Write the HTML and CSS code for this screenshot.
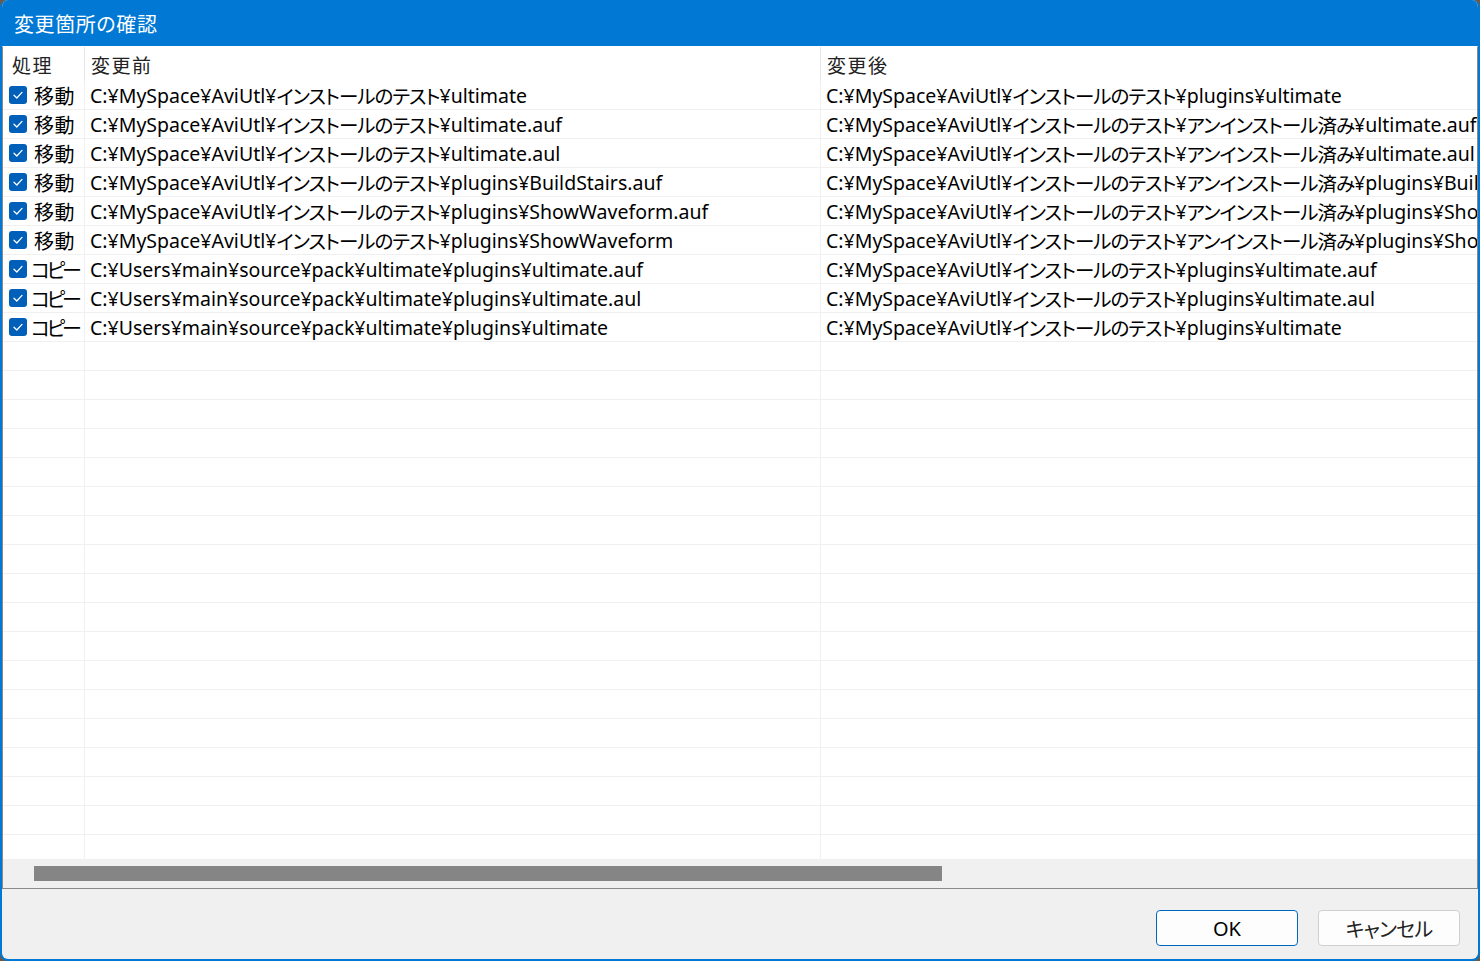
FILE: index.html
```html
<!DOCTYPE html>
<html lang="ja">
<head>
<meta charset="utf-8">
<title>変更箇所の確認</title>
<link rel="stylesheet" href="styles.css">
</head>
<body>
<div class="window">
  <div class="titlebar">変更箇所の確認</div>
  <div class="listview">
    <div class="grid">
      <div class="header">
        <div class="c1 h">処理</div>
        <div class="c2 h">変更前</div>
        <div class="c3 h">変更後</div>
      </div>
      <div class="row">
        <div class="c1"><span class="cb"><svg viewBox="0 0 18 18" width="18" height="18"><path d="M5 9.3 L7.8 12 L13 6.4"/></svg></span><span class="op">移動</span></div>
        <div class="c2">C:¥MySpace¥AviUtl¥<span class="jp">インストールのテスト</span>¥ultimate</div>
        <div class="c3">C:¥MySpace¥AviUtl¥<span class="jp">インストールのテスト</span>¥plugins¥ultimate</div>
      </div>
      <div class="row">
        <div class="c1"><span class="cb"><svg viewBox="0 0 18 18" width="18" height="18"><path d="M5 9.3 L7.8 12 L13 6.4"/></svg></span><span class="op">移動</span></div>
        <div class="c2">C:¥MySpace¥AviUtl¥<span class="jp">インストールのテスト</span>¥ultimate.auf</div>
        <div class="c3">C:¥MySpace¥AviUtl¥<span class="jp">インストールのテスト</span>¥<span class="jp">アンインストール済み</span>¥ultimate.auf</div>
      </div>
      <div class="row">
        <div class="c1"><span class="cb"><svg viewBox="0 0 18 18" width="18" height="18"><path d="M5 9.3 L7.8 12 L13 6.4"/></svg></span><span class="op">移動</span></div>
        <div class="c2">C:¥MySpace¥AviUtl¥<span class="jp">インストールのテスト</span>¥ultimate.aul</div>
        <div class="c3">C:¥MySpace¥AviUtl¥<span class="jp">インストールのテスト</span>¥<span class="jp">アンインストール済み</span>¥ultimate.aul</div>
      </div>
      <div class="row">
        <div class="c1"><span class="cb"><svg viewBox="0 0 18 18" width="18" height="18"><path d="M5 9.3 L7.8 12 L13 6.4"/></svg></span><span class="op">移動</span></div>
        <div class="c2">C:¥MySpace¥AviUtl¥<span class="jp">インストールのテスト</span>¥plugins¥BuildStairs.auf</div>
        <div class="c3">C:¥MySpace¥AviUtl¥<span class="jp">インストールのテスト</span>¥<span class="jp">アンインストール済み</span>¥plugins¥BuildStairs.auf</div>
      </div>
      <div class="row">
        <div class="c1"><span class="cb"><svg viewBox="0 0 18 18" width="18" height="18"><path d="M5 9.3 L7.8 12 L13 6.4"/></svg></span><span class="op">移動</span></div>
        <div class="c2">C:¥MySpace¥AviUtl¥<span class="jp">インストールのテスト</span>¥plugins¥ShowWaveform.auf</div>
        <div class="c3">C:¥MySpace¥AviUtl¥<span class="jp">インストールのテスト</span>¥<span class="jp">アンインストール済み</span>¥plugins¥ShowWaveform.auf</div>
      </div>
      <div class="row">
        <div class="c1"><span class="cb"><svg viewBox="0 0 18 18" width="18" height="18"><path d="M5 9.3 L7.8 12 L13 6.4"/></svg></span><span class="op">移動</span></div>
        <div class="c2">C:¥MySpace¥AviUtl¥<span class="jp">インストールのテスト</span>¥plugins¥ShowWaveform</div>
        <div class="c3">C:¥MySpace¥AviUtl¥<span class="jp">インストールのテスト</span>¥<span class="jp">アンインストール済み</span>¥plugins¥ShowWaveform</div>
      </div>
      <div class="row">
        <div class="c1"><span class="cb"><svg viewBox="0 0 18 18" width="18" height="18"><path d="M5 9.3 L7.8 12 L13 6.4"/></svg></span><span class="op copy">コピー</span></div>
        <div class="c2">C:¥Users¥main¥source¥pack¥ultimate¥plugins¥ultimate.auf</div>
        <div class="c3">C:¥MySpace¥AviUtl¥<span class="jp">インストールのテスト</span>¥plugins¥ultimate.auf</div>
      </div>
      <div class="row">
        <div class="c1"><span class="cb"><svg viewBox="0 0 18 18" width="18" height="18"><path d="M5 9.3 L7.8 12 L13 6.4"/></svg></span><span class="op copy">コピー</span></div>
        <div class="c2">C:¥Users¥main¥source¥pack¥ultimate¥plugins¥ultimate.aul</div>
        <div class="c3">C:¥MySpace¥AviUtl¥<span class="jp">インストールのテスト</span>¥plugins¥ultimate.aul</div>
      </div>
      <div class="row">
        <div class="c1"><span class="cb"><svg viewBox="0 0 18 18" width="18" height="18"><path d="M5 9.3 L7.8 12 L13 6.4"/></svg></span><span class="op copy">コピー</span></div>
        <div class="c2">C:¥Users¥main¥source¥pack¥ultimate¥plugins¥ultimate</div>
        <div class="c3">C:¥MySpace¥AviUtl¥<span class="jp">インストールのテスト</span>¥plugins¥ultimate</div>
      </div>
      <div class="row"><div class="c1"></div><div class="c2"></div><div class="c3"></div></div>
      <div class="row"><div class="c1"></div><div class="c2"></div><div class="c3"></div></div>
      <div class="row"><div class="c1"></div><div class="c2"></div><div class="c3"></div></div>
      <div class="row"><div class="c1"></div><div class="c2"></div><div class="c3"></div></div>
      <div class="row"><div class="c1"></div><div class="c2"></div><div class="c3"></div></div>
      <div class="row"><div class="c1"></div><div class="c2"></div><div class="c3"></div></div>
      <div class="row"><div class="c1"></div><div class="c2"></div><div class="c3"></div></div>
      <div class="row"><div class="c1"></div><div class="c2"></div><div class="c3"></div></div>
      <div class="row"><div class="c1"></div><div class="c2"></div><div class="c3"></div></div>
      <div class="row"><div class="c1"></div><div class="c2"></div><div class="c3"></div></div>
      <div class="row"><div class="c1"></div><div class="c2"></div><div class="c3"></div></div>
      <div class="row"><div class="c1"></div><div class="c2"></div><div class="c3"></div></div>
      <div class="row"><div class="c1"></div><div class="c2"></div><div class="c3"></div></div>
      <div class="row"><div class="c1"></div><div class="c2"></div><div class="c3"></div></div>
      <div class="row"><div class="c1"></div><div class="c2"></div><div class="c3"></div></div>
      <div class="row"><div class="c1"></div><div class="c2"></div><div class="c3"></div></div>
      <div class="row"><div class="c1"></div><div class="c2"></div><div class="c3"></div></div>
      <div class="row"><div class="c1"></div><div class="c2"></div><div class="c3"></div></div>
    </div>
    <div class="hscroll"><div class="thumb"></div></div>
  </div>
  <div class="footer">
    <button class="btn ok">OK</button>
    <button class="btn">キャンセル</button>
  </div>
</div>
</body>
</html>
```
FILE: styles.css
```css
html, body {
  margin: 0;
  padding: 0;
}
body {
  background: #6a5a4a;
  font-family: "Noto Sans", "Noto Sans CJK JP", sans-serif;
  font-feature-settings: "palt";
}
.window {
  width: 1480px;
  height: 961px;
  box-sizing: border-box;
  border: 2px solid #0078d4;
  border-top: 0;
  border-radius: 8px;
  background: #f0f0f0;
  display: flex;
  flex-direction: column;
  overflow: hidden;
}
.titlebar {
  height: 46px;
  flex: none;
  background: #0078d4;
  color: #fff;
  font-size: 20px;
  letter-spacing: 0.6px;
  display: flex;
  align-items: center;
  margin: 0 -2px;
  padding-left: 14px;
}
.listview {
  height: 843px;
  flex: none;
  box-sizing: border-box;
  border: 1px solid #8a8a8a;
  border-top: 1px solid #ffffff;
  background: #fff;
  display: flex;
  flex-direction: column;
}
.grid {
  flex: 1;
  overflow: hidden;
}
.header, .row {
  display: flex;
  white-space: nowrap;
  overflow: hidden;
}
.header {
  height: 34px;
}
.row {
  height: 29px;
  box-sizing: border-box;
  border-bottom: 1px solid #f0f0f0;
}
.c1, .c2, .c3 {
  display: flex;
  align-items: center;
  box-sizing: border-box;
  font-size: 19.5px;
  color: #000;
}
.row .c2, .row .c3 {
  padding-top: 1px;
}
.c1 {
  width: 82px;
  flex: none;
  border-right: 1px solid #f0f0f0;
  overflow: hidden;
}
.c2 {
  width: 736px;
  flex: none;
  border-right: 1px solid #f0f0f0;
  padding-left: 5px;
  overflow: hidden;
}
.c3 {
  flex: 1;
  min-width: 0;
  padding-left: 5px;
  overflow: hidden;
}
.jp {
  letter-spacing: -1px;
}
.header .c1, .header .c2 {
  border-right-color: #e5e5e5;
}
.h {
  font-size: 19px;
  letter-spacing: 1.5px;
  color: #222;
  padding-top: 2px;
}
.header .c1 {
  padding-left: 9px;
}
.header .c2, .header .c3 {
  padding-left: 6px;
}
.cb {
  width: 18px;
  height: 18px;
  flex: none;
  border-radius: 3px;
  background: #005fb8;
  margin-left: 6px;
  margin-right: 7px;
  display: flex;
}
.cb path {
  fill: none;
  stroke: #fff;
  stroke-width: 1.3;
  stroke-linecap: round;
  stroke-linejoin: round;
}
.op {
  font-size: 20px;
  letter-spacing: 0.5px;
}
.op.copy {
  letter-spacing: -3.3px;
  margin-left: -3px;
}
.hscroll {
  height: 29px;
  flex: none;
  background: #f0f0f0;
  padding-top: 7px;
  box-sizing: border-box;
}
.thumb {
  margin-left: 31px;
  width: 908px;
  height: 15px;
  background: #858585;
}
.footer {
  flex: 1;
  display: flex;
  justify-content: flex-end;
  align-items: flex-start;
  gap: 20px;
  padding: 21px 18px 0 0;
}
.btn {
  width: 142px;
  height: 36px;
  box-sizing: border-box;
  border: 1px solid #d0d0d0;
  border-radius: 4px;
  background: #fdfdfd;
  font-family: "Noto Sans", "Noto Sans CJK JP", sans-serif;
  font-feature-settings: "palt";
  font-size: 20px;
  color: #000;
  padding: 0;
}
.btn + .btn {
  letter-spacing: -0.8px;
  color: #222;
}
.btn.ok {
  border-color: #0067c0;
}
```
